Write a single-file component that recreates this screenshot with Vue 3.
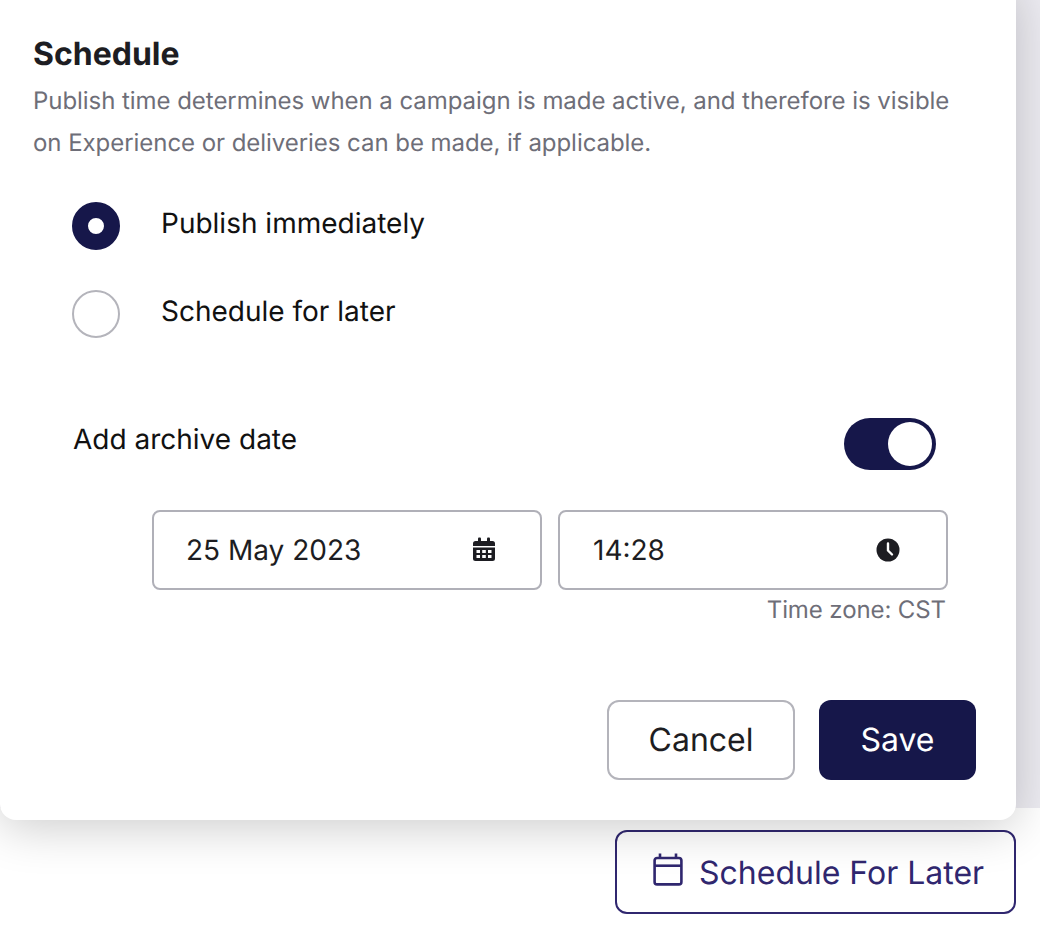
<script setup>
import { ref } from "vue";
const publishMode = ref("now");
const archive = ref(true);
</script>
<template>
  <main class="page">
    <div class="backdrop"></div>
    <footer class="footer">
      <button class="later" type="button">
        <svg width="36" height="38" viewBox="0 0 36 38" fill="none" stroke="currentColor" stroke-width="2.6" stroke-linejoin="round">
          <rect x="5.600" y="5" width="26.800" height="26.400" rx="2.500"></rect>
          <line x1="5.600" y1="12.700" x2="32.400" y2="12.700"></line>
          <line x1="11" y1="0.500" x2="11" y2="5"></line>
          <line x1="27" y1="0.500" x2="27" y2="5"></line>
        </svg>
        <span>Schedule For Later</span>
      </button>
    </footer>

    <section class="modal">
      <h2>Schedule</h2>
      <p class="desc">
        Publish time determines when a campaign is made active, and therefore is visible on Experience or deliveries can be made, if applicable.
      </p>

      <div class="radios">
        <label class="radio-row" @click="publishMode = 'now'">
          <span class="radio" :class="{ on: publishMode === 'now' }"></span>
          <span class="radio-text">Publish immediately</span>
        </label>
        <label class="radio-row" @click="publishMode = 'later'">
          <span class="radio" :class="{ on: publishMode === 'later' }"></span>
          <span class="radio-text">Schedule for later</span>
        </label>
      </div>

      <div class="archive">
        <span class="archive-label">Add archive date</span>
        <button class="toggle" :class="{ on: archive }" type="button" @click="archive = !archive">
          <span class="knob"></span>
        </button>
      </div>

      <div class="fields">
        <div class="field date">
          <span>25 May 2023</span>
          <svg width="24" height="26" viewBox="0 0 24 26" fill="#1d1d22">
            <rect x="6" y="0.5" width="3" height="5" rx="1"></rect>
            <rect x="15" y="0.5" width="3" height="5" rx="1"></rect>
            <path d="M1 6.5a2.5 2.5 0 0 1 2.5-2.5h17a2.5 2.5 0 0 1 2.5 2.5V9H1z"></path>
            <path fill-rule="evenodd" d="M1 10.5h22v11a2.5 2.5 0 0 1-2.5 2.5h-17A2.5 2.5 0 0 1 1 21.500zM4.500 13v3h3.500v-3zM10.200 13v3h3.600v-3zM16 13v3h3.500v-3zM4.500 18v3h3.500v-3zM10.200 18v3h3.600v-3zM16 18v3h3.500v-3z"></path>
          </svg>
        </div>
        <div class="field time">
          <span>14:28</span>
          <svg width="24" height="24" viewBox="0 0 24 24">
            <circle cx="12" cy="12" r="11.500" fill="#1d1d22"></circle>
            <path d="M12 5.500V12.500L16 16.500" fill="none" stroke="#fff" stroke-width="2.400" stroke-linecap="round" stroke-linejoin="round"></path>
          </svg>
        </div>
      </div>
      <p class="zone">Time zone: CST</p>

      <div class="actions">
        <button class="btn cancel" type="button">Cancel</button>
        <button class="btn save" type="button">Save</button>
      </div>
    </section>
  </main>
</template>
<style scoped>
.page {
  position: relative;
  width: 1040px;
  height: 928px;
  overflow: hidden;
  font-family: Inter, "Liberation Sans", sans-serif;
  text-rendering: geometricPrecision;
  background: #fff;
}

.backdrop {
  height: 808px;
  background: #ecebf1;
}

.footer {
  display: flex;
  justify-content: flex-end;
  padding: 22px 24px 0 0;
}

.later {
  display: flex;
  align-items: center;
  gap: 14px;
  width: 401px;
  height: 84px;
  padding: 0 0 0 32px;
  box-sizing: border-box;
  background: transparent;
  border: 2px solid #30276f;
  border-radius: 12px;
  color: #30276f;
  font: 400 32px Inter, sans-serif;
  text-rendering: geometricPrecision;
}

.modal {
  position: absolute;
  top: -20px;
  left: 0;
  width: 1016px;
  height: 840px;
  box-sizing: border-box;
  padding: 50px 40px 0 33px;
  background: #fff;
  border-radius: 0 16px 16px 16px;
  box-shadow: 0 8px 48px rgba(0, 0, 0, 0.2);
}

h2 {
  margin: 0;
  font-size: 32px;
  line-height: 48px;
  font-weight: 700;
  color: #1d1d22;
}

.desc {
  margin: 2px 0 0;
  width: 930px;
  font-size: 24px;
  line-height: 42px;
  letter-spacing: -0.05px;
  color: #6e6e78;
}

.radios {
  display: flex;
  flex-direction: column;
  gap: 40px;
  margin: 38px 0 0 39px;
}

.radio-row {
  display: flex;
  align-items: center;
  gap: 41px;
  font-size: 28px;
  color: #111;
}

.radio-text {
  padding-bottom: 7px;
}

.radio {
  width: 48px;
  height: 48px;
  box-sizing: border-box;
  border: 2px solid #b4b4bb;
  border-radius: 50%;
}

.radio.on {
  border: 16px solid #16174a;
}

.archive {
  display: flex;
  align-items: center;
  justify-content: space-between;
  width: 863px;
  margin: 80px 0 0 40px;
  font-size: 28px;
  color: #111;
}

.archive-label {
  padding-bottom: 10px;
}

.toggle {
  display: flex;
  align-items: center;
  justify-content: flex-end;
  width: 92px;
  height: 52px;
  padding: 4px;
  border: none;
  border-radius: 26px;
  background: #16174a;
}

.knob {
  width: 44px;
  height: 44px;
  border-radius: 50%;
  background: #fff;
}

.fields {
  display: flex;
  gap: 16px;
  margin: 40px 0 0 119px;
}

.field {
  display: flex;
  align-items: center;
  justify-content: space-between;
  width: 390px;
  height: 80px;
  box-sizing: border-box;
  border: 2px solid #b0b0b8;
  border-radius: 8px;
  font-size: 28px;
  color: #1d1d22;
}

.date {
  padding: 0 44px 0 32px;
}

.time {
  padding: 0 46px 0 33px;
}

.zone {
  margin: 4px 0 0;
  width: 913px;
  text-align: right;
  font-size: 24px;
  line-height: 32px;
  letter-spacing: -0.1px;
  color: #6e6e78;
}

.actions {
  display: flex;
  justify-content: flex-end;
  gap: 24px;
  margin-top: 74px;
}

.btn {
  height: 80px;
  padding-bottom: 2px;
  border-radius: 12px;
  font: 400 32px Inter, sans-serif;
  text-rendering: geometricPrecision;
}

.cancel {
  width: 188px;
  background: #fff;
  border: 2px solid #b4b4bb;
  color: #1d1d22;
}

.save {
  width: 157px;
  background: #16174a;
  border: none;
  color: #fff;
}
</style>
